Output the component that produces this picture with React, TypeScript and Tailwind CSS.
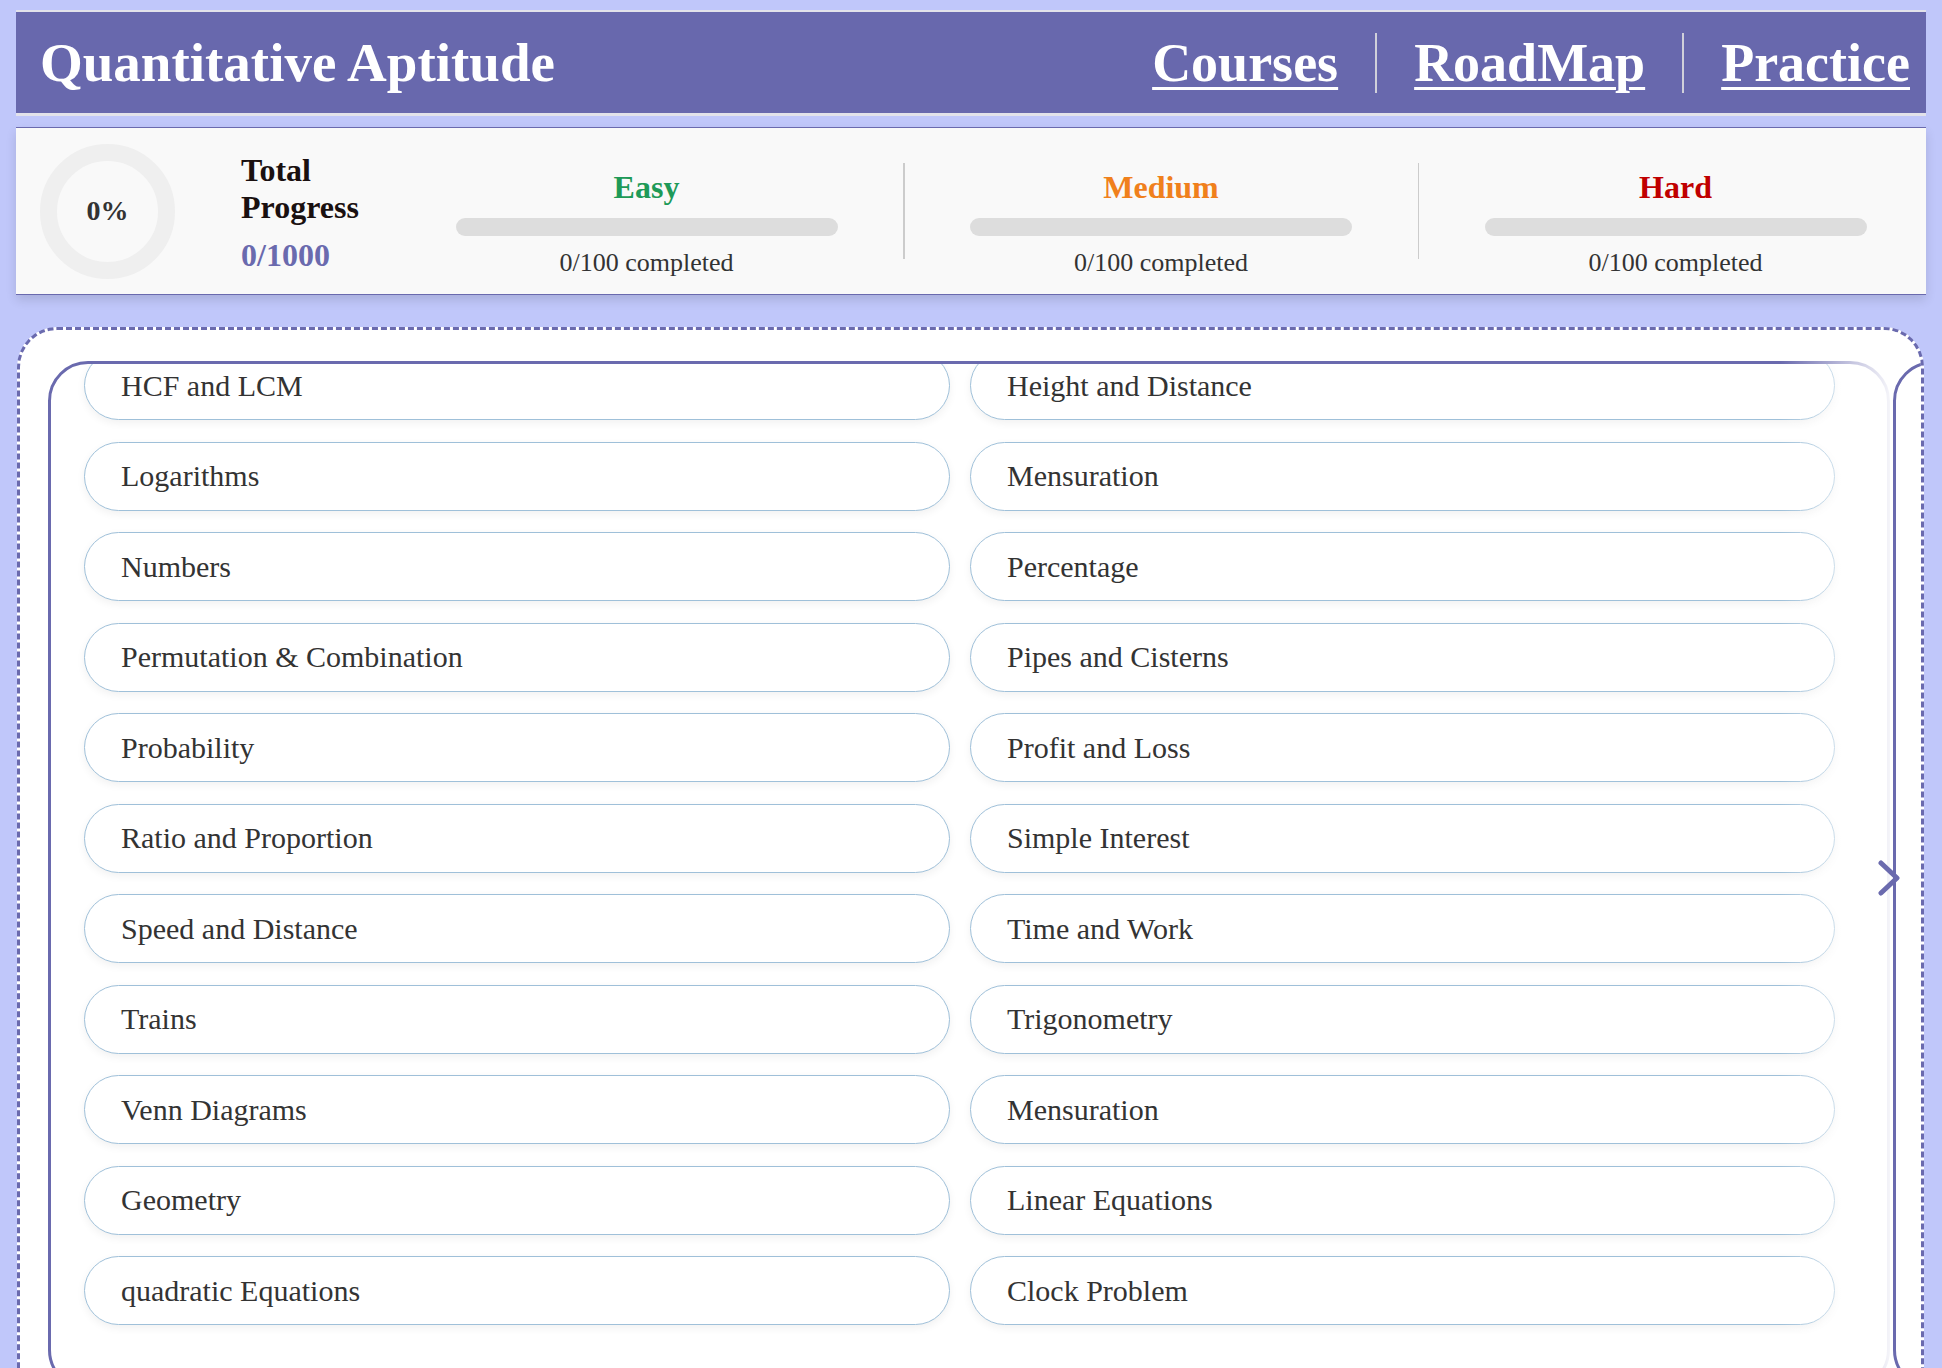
import React from "react";

const left = [
  "HCF and LCM",
  "Logarithms",
  "Numbers",
  "Permutation & Combination",
  "Probability",
  "Ratio and Proportion",
  "Speed and Distance",
  "Trains",
  "Venn Diagrams",
  "Geometry",
  "quadratic Equations",
];
const right = [
  "Height and Distance",
  "Mensuration",
  "Percentage",
  "Pipes and Cisterns",
  "Profit and Loss",
  "Simple Interest",
  "Time and Work",
  "Trigonometry",
  "Mensuration",
  "Linear Equations",
  "Clock Problem",
];

const serif = { fontFamily: '"Liberation Serif", "Times New Roman", serif' };

function Pill({ label }: { label: string }) {
  return (
    <div className="h-[69px] rounded-full border-[1.5px] border-[#9fc0d9] bg-white pl-[36px] flex items-center shadow-[0_3px_8px_rgba(0,0,0,0.06)]">
      <span className="text-[30px] leading-none text-[#333333]">{label}</span>
    </div>
  );
}

function Level({ name, color }: { name: string; color: string }) {
  return (
    <div className="w-[513px] shrink-0 self-start pt-[41px] flex flex-col items-center">
      <div className={`text-[32px] leading-[37px] font-bold ${color}`}>{name}</div>
      <div className="mt-[12px] w-[382px] h-[18px] rounded-full bg-[#dddddd]" />
      <div className="mt-[12px] text-[26px] leading-[30px] text-[#333333]">0/100 completed</div>
    </div>
  );
}

export default function App() {
  const rows = left.map((l, i) => [l, right[i]]);
  return (
    <div className="h-[1368px] overflow-hidden bg-[#c0c7fa]" style={serif}>
      <div className="pt-[10px] px-[16px]">
        {/* Header */}
        <header className="h-[106px] bg-[#6868ad] border-t-2 border-b-[3px] border-[#e2e2ea] flex items-center justify-between pl-[24px] pr-[16px]">
          <h1 className="text-[55px] font-bold text-white leading-[62px]">Quantitative Aptitude</h1>
          <nav className="flex items-center gap-[37px]">
            <a className="text-[54px] font-bold text-white underline decoration-[3px] underline-offset-[6px] leading-[62px]">Courses</a>
            <span className="w-[2px] h-[60px] bg-[#d0d0da]" />
            <a className="text-[54px] font-bold text-white underline decoration-[3px] underline-offset-[6px] leading-[62px]">RoadMap</a>
            <span className="w-[2px] h-[60px] bg-[#d0d0da]" />
            <a className="text-[54px] font-bold text-white underline decoration-[3px] underline-offset-[6px] leading-[62px]">Practice</a>
          </nav>
        </header>

        {/* Stats */}
        <section className="mt-[11px] h-[168px] bg-[#f9f9f9] border-y border-[#6a6aae] shadow-[0_5px_10px_rgba(0,0,0,0.12)] flex items-center overflow-hidden">
          <div className="w-[374px] shrink-0 pl-[24px] flex items-center">
            <div className="w-[135px] h-[135px] rounded-full border-[17px] border-[#efefef] flex items-center justify-center shrink-0">
              <span className="text-[28px] font-bold text-[#333333]">0%</span>
            </div>
            <div className="ml-[66px] pt-[3px]">
              <div className="w-[150px] text-[32px] leading-[37px] font-bold text-[#1a1010]">Total Progress</div>
              <div className="mt-[11px] text-[32px] leading-[37px] font-bold text-[#6a6aae]">0/1000</div>
            </div>
          </div>
          <Level name="Easy" color="text-[#1e9a58]" />
          <span className="w-[1.5px] h-[96px] bg-[#cccccc] shrink-0" />
          <Level name="Medium" color="text-[#f0801c]" />
          <span className="w-[1.5px] h-[96px] bg-[#cccccc] shrink-0" />
          <Level name="Hard" color="text-[#c00000]" />
        </section>
      </div>

      {/* Topics */}
      <div className="mt-[32px] ml-[17px] mr-[18px] relative rounded-[40px] border-[3px] border-dashed border-[#6a6aae] bg-white pt-[31px] pb-[30px] pl-[28px] overflow-hidden">
        <div className="flex gap-[3px]">
          <div className="w-[1842px] shrink-0 h-[1029px] rounded-[40px] border-[3px] border-[#6a6aae] overflow-hidden pl-[33px]">
            <div className="-mt-[13px] grid grid-cols-[866px_865px] gap-x-[20px] gap-y-[21.5px]">
              {rows.map(([a, b], i) => (
                <React.Fragment key={i}>
                  <Pill label={a} />
                  <Pill label={b} />
                </React.Fragment>
              ))}
            </div>
          </div>
          <div className="w-[600px] shrink-0 h-[1029px] rounded-[40px] border-[3px] border-[#6a6aae] relative z-10" />
        </div>
        {/* fade overlay */}
        <div className="absolute top-0 bottom-0 left-[1760px] w-[118px] bg-gradient-to-r from-white/0 to-white" />
        {/* arrow */}
        <div className="absolute left-[1858px] top-[528px] z-20">
          <svg width="24" height="40" viewBox="0 0 24 40">
            <polyline points="3,5 19,20 3,35" fill="none" stroke="#6a6aae" strokeWidth="5" strokeLinecap="round" strokeLinejoin="round" />
          </svg>
        </div>
      </div>
    </div>
  );
}
